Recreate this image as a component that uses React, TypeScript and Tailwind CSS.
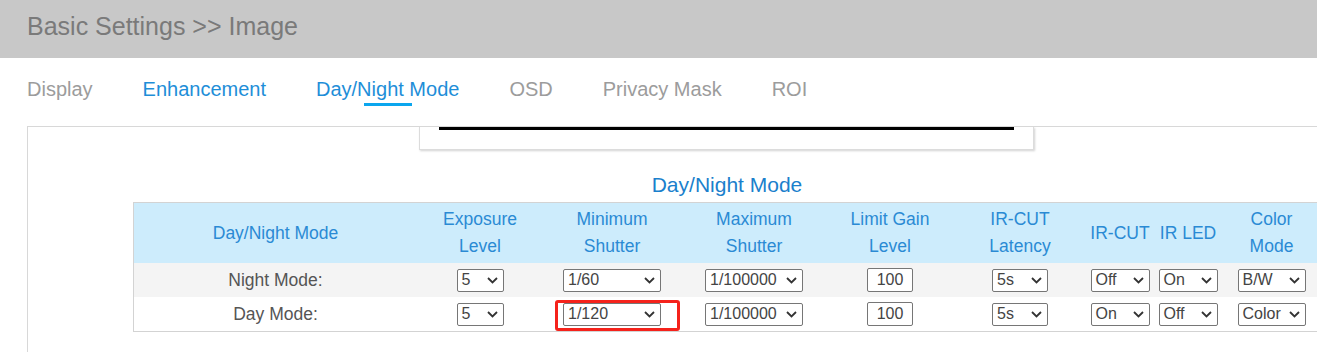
import React from "react";

const Chevron = () => (
  <svg width="11" height="7" viewBox="0 0 11 7" className="shrink-0">
    <path d="M1 1 L5.5 5.5 L10 1" fill="none" stroke="#333" strokeWidth="1.8" />
  </svg>
);

const Sel = ({ value, w }: { value: string; w: string }) => (
  <div
    className={`h-[23px] ${w} border border-[#767676] rounded-[2px] bg-white flex items-center justify-between pl-[4px] pr-[5px] text-[16px] text-[#444] leading-none`}
  >
    <span>{value}</span>
    <Chevron />
  </div>
);

const Inp = ({ value }: { value: string }) => (
  <div className="h-[24px] w-[46px] border border-[#767676] rounded-[2px] bg-white flex items-center justify-center text-[16px] text-[#444] leading-none">
    {value}
  </div>
);

const colW = [
  "w-[283px]",
  "w-[126px]",
  "w-[138px]",
  "w-[146px]",
  "w-[126px]",
  "w-[134px]",
  "w-[66px]",
  "w-[70px]",
  "w-[97px]",
];

const headers: string[][] = [
  ["Day/Night Mode"],
  ["Exposure", "Level"],
  ["Minimum", "Shutter"],
  ["Maximum", "Shutter"],
  ["Limit Gain", "Level"],
  ["IR-CUT", "Latency"],
  ["IR-CUT"],
  ["IR LED"],
  ["Color", "Mode"],
];

export default function App() {
  const tabs = [
    { t: "Display", c: "text-[#9c9c9c]" },
    { t: "Enhancement", c: "text-[#1e8ed8]" },
    { t: "Day/Night Mode", c: "text-[#1e8ed8]", active: true },
    { t: "OSD", c: "text-[#9c9c9c]" },
    { t: "Privacy Mask", c: "text-[#9c9c9c]" },
    { t: "ROI", c: "text-[#9c9c9c]" },
  ];

  const rows = [
    { label: "Night Mode:", bg: "bg-[#f4f4f4]", v: ["5", "1/60", "1/100000", "100", "5s", "Off", "On", "B/W"], red: false },
    { label: "Day Mode:", bg: "bg-white", v: ["5", "1/120", "1/100000", "100", "5s", "On", "Off", "Color"], red: true },
  ];

  return (
    <div className="w-[1317px] h-[352px] overflow-hidden bg-white font-['Liberation_Sans',Arial,sans-serif]">
      <div className="h-[58px] bg-[#c8c8c8] pl-[27px] pt-[12px]">
        <div className="text-[25px] leading-[28px] text-[#7a7a7a]">Basic Settings &gt;&gt; Image</div>
      </div>

      <div className="pl-[27px] pt-[19px] flex gap-[50px]">
        {tabs.map((tb) => (
          <div key={tb.t} className="relative h-[29px]">
            <div className={`text-[20px] leading-[24px] whitespace-nowrap ${tb.c}`}>{tb.t}</div>
            {tb.active && (
              <div className="absolute left-1/2 -translate-x-1/2 top-[26px] h-[3px] w-[48px] bg-[#0ba6ee]" />
            )}
          </div>
        ))}
      </div>

      <div className="ml-[27px] mt-[20px] w-[1400px] h-[300px] border border-[#d8d8d8] overflow-hidden">
        <div className="ml-[391px] w-[615px] h-[23px] bg-white border-l border-r border-b border-[#dcdcdc] shadow-[1px_1px_2px_rgba(0,0,0,0.18)] px-[19px]">
          <div className="h-[3px] bg-black" />
        </div>

        <div className="mt-[23px] text-center text-[21px] leading-[24px] text-[#1a80cc]">Day/Night Mode</div>

        <div className="mt-[5px] ml-[105px] w-[1188px] border border-[#d3d3d3]">
          <div className="flex h-[60px] bg-[#cdecfc]">
            {headers.map((h, i) => (
              <div
                key={i}
                className={`${colW[i]} shrink-0 flex flex-col items-center justify-center text-[17.5px] leading-[27px] text-[#2a8ad4] whitespace-nowrap`}
              >
                {h.map((l) => (
                  <div key={l}>{l}</div>
                ))}
              </div>
            ))}
          </div>
          {rows.map((r) => (
            <div key={r.label} className={`flex h-[34px] items-center ${r.bg}`}>
              <div className={`${colW[0]} shrink-0 text-center text-[17.5px] text-[#555]`}>{r.label}</div>
              <div className={`${colW[1]} shrink-0 flex justify-center`}>
                <Sel value={r.v[0]} w="w-[47px]" />
              </div>
              <div className={`${colW[2]} shrink-0 flex justify-center relative`}>
                <Sel value={r.v[1]} w="w-[98px]" />
                {r.red && (
                  <div className="absolute left-[12px] top-[-3px] w-[125px] h-[31px] border-[3px] border-[#f5221b] rounded-[3px]" />
                )}
              </div>
              <div className={`${colW[3]} shrink-0 flex justify-center`}>
                <Sel value={r.v[2]} w="w-[98px]" />
              </div>
              <div className={`${colW[4]} shrink-0 flex justify-center`}>
                <Inp value={r.v[3]} />
              </div>
              <div className={`${colW[5]} shrink-0 flex justify-center`}>
                <Sel value={r.v[4]} w="w-[56px]" />
              </div>
              <div className={`${colW[6]} shrink-0 flex justify-center`}>
                <Sel value={r.v[5]} w="w-[59px]" />
              </div>
              <div className={`${colW[7]} shrink-0 flex justify-center`}>
                <Sel value={r.v[6]} w="w-[59px]" />
              </div>
              <div className={`${colW[8]} shrink-0 flex justify-center`}>
                <Sel value={r.v[7]} w="w-[68px]" />
              </div>
            </div>
          ))}
        </div>
      </div>
    </div>
  );
}
